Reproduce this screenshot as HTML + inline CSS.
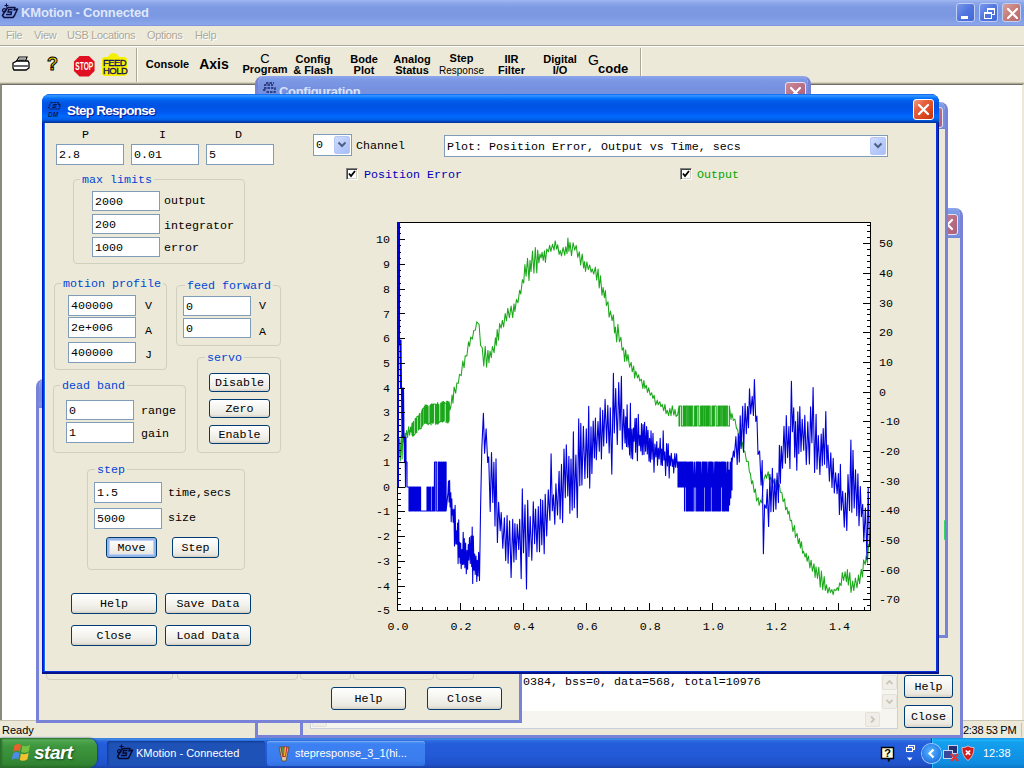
<!DOCTYPE html><html><head><meta charset="utf-8"><title>KMotion - Connected</title><style>
*{box-sizing:border-box;margin:0;padding:0}
html,body{width:1024px;height:768px;overflow:hidden;background:#fff}
body{position:relative;font-family:"Liberation Sans",sans-serif;font-size:11px;color:#000}
.abs{position:absolute}
.m{font-family:"Liberation Mono","DejaVu Sans Mono",monospace;font-size:11.67px;line-height:14px;white-space:pre;color:#000}
.in{position:absolute;background:#fff;border:1px solid #7f9db9;font-family:"Liberation Mono",monospace;font-size:11.67px;line-height:18px;padding-left:2px;white-space:pre;overflow:hidden}
.gb{position:absolute;border:1px solid #d0d0bf;border-radius:4px}
.gl{position:absolute;background:#ece9d8;color:#0046d5;font-family:"Liberation Mono",monospace;font-size:11.67px;line-height:14px;white-space:pre;padding:0 2px}
.btn{position:absolute;border:1px solid #003c74;border-radius:3px;background:linear-gradient(#fff 0,#f4f3ee 50%,#eae8df 85%,#d6d0c5 100%);font-family:"Liberation Mono",monospace;font-size:11.67px;text-align:center;white-space:pre;color:#000}
.btn.def{box-shadow:inset 0 0 0 2px #98b5ea, inset 0 0 0 3px #bcd1f5}
.sb{width:15px;height:15px;border:1px solid #e4e1d6;border-radius:2px;background:#efeee8}
.tb{position:absolute;font-family:"Liberation Sans",sans-serif;font-weight:bold;font-size:11px;line-height:11px;text-align:center;white-space:pre;color:#000}
</style></head><body><div class="abs" id="mtitle" style="left:0;top:0;width:1024px;height:26px;background:linear-gradient(#a2b8f2 0,#8ea8ea 10%,#7d9ae3 28%,#7a97e1 60%,#86a2e8 86%,#8aa5ea 94%,#7890d8 100%)"></div><div class="abs" style="left:21px;top:5px;font:bold 13px/16px 'Liberation Sans',sans-serif;color:#dfe7fa;white-space:pre;letter-spacing:-0.15px" id="mtxt">KMotion - Connected</div><svg class="abs" style="left:0px;top:0px" width="20" height="22" viewBox="0 0 20 22"><path d="M4 17.5L2.5 15.5L6 9.5L8 7.5H15L14 10L17.5 9L14.5 15.5L13 17.5Z" fill="none" stroke="#0c1040" stroke-width="1.5" stroke-linejoin="round"/><path d="M12.5 9.5H8.5L8 12H11.5L11 14.5H6" fill="none" stroke="#0c1040" stroke-width="1.4"/><circle cx="4.3" cy="10.3" r="1.7" fill="none" stroke="#0c1040" stroke-width="1.3"/><path d="M6.5 3.5v4M4.5 5.5h4" stroke="#0c1040" stroke-width="1.1"/></svg><div class="abs" style="left:956px;top:3px;width:19px;height:19px;border:1px solid #c0cef4;border-radius:3px;background:linear-gradient(135deg,#7b97ea 0,#5076de 50%,#4468d4 100%);overflow:hidden"><div style="position:absolute;left:4px;top:12px;width:7px;height:3px;background:#fff"></div></div><div class="abs" style="left:979px;top:3px;width:19px;height:19px;border:1px solid #c0cef4;border-radius:3px;background:linear-gradient(135deg,#7b97ea 0,#5076de 50%,#4468d4 100%);overflow:hidden"><div style="position:absolute;left:7px;top:4px;width:8px;height:7px;border:1px solid #fff;border-top-width:2px"></div><div style="position:absolute;left:4px;top:8px;width:8px;height:7px;border:1px solid #fff;border-top-width:2px;background:#5076de"></div></div><div class="abs" style="left:1002px;top:3px;width:19px;height:19px;border:1px solid #c0cef4;border-radius:3px;background:linear-gradient(135deg,#d8a09c 0,#c67c78 50%,#b86a68 100%);overflow:hidden"><svg width="19" height="19" viewBox="0 0 19 19" style="position:absolute;left:0;top:0"><path d="M5 5l9 9M14 5l-9 9" stroke="#fff" stroke-width="2.2" stroke-linecap="round"/></svg></div><div class="abs" style="left:0;top:26px;width:1024px;height:20px;background:#ece9d8"></div><div class="abs" style="left:6px;top:29px;font:11px/13px 'Liberation Sans',sans-serif;letter-spacing:-0.35px;color:#aca899;white-space:pre;text-shadow:1px 1px 0 #fff">File</div><div class="abs" style="left:34px;top:29px;font:11px/13px 'Liberation Sans',sans-serif;letter-spacing:-0.35px;color:#aca899;white-space:pre;text-shadow:1px 1px 0 #fff">View</div><div class="abs" style="left:67px;top:29px;font:11px/13px 'Liberation Sans',sans-serif;letter-spacing:-0.35px;color:#aca899;white-space:pre;text-shadow:1px 1px 0 #fff">USB Locations</div><div class="abs" style="left:147px;top:29px;font:11px/13px 'Liberation Sans',sans-serif;letter-spacing:-0.35px;color:#aca899;white-space:pre;text-shadow:1px 1px 0 #fff">Options</div><div class="abs" style="left:195px;top:29px;font:11px/13px 'Liberation Sans',sans-serif;letter-spacing:-0.35px;color:#aca899;white-space:pre;text-shadow:1px 1px 0 #fff">Help</div><div class="abs" style="left:0;top:45px;width:1024px;height:1px;background:#aca899"></div><div class="abs" style="left:0;top:46px;width:1024px;height:1px;background:#fff"></div><div class="abs" style="left:0;top:47px;width:1024px;height:37px;background:#ece9d8"></div><div class="abs" style="left:0;top:82px;width:1024px;height:1px;background:#d8d2bd"></div><div class="abs" style="left:0;top:83px;width:1024px;height:1px;background:#aca899"></div><div class="abs" style="left:136px;top:48px;width:1px;height:34px;background:#aca899"></div><div class="abs" style="left:137px;top:48px;width:1px;height:34px;background:#fff"></div><div class="abs" style="left:640px;top:48px;width:1px;height:34px;background:#aca899"></div><div class="abs" style="left:641px;top:48px;width:1px;height:34px;background:#fff"></div><svg class="abs" style="left:11px;top:55px" width="20" height="18" viewBox="0 0 20 18"><path d="M5 7 L8 2 L16 2 L14 7" fill="#fff" stroke="#000" stroke-width="1.2"/><path d="M2 8 L6 6 L17 6 L18 8 L18 13 L15 15 L3 15 L2 13 Z" fill="#fff" stroke="#000" stroke-width="1.3"/><path d="M3 11 H17" stroke="#000" stroke-width="1.2"/><path d="M8 4h6M7 5.3h6" stroke="#000" stroke-width=".7"/></svg><div class="abs" style="left:47px;top:54px;font:bold 18px/20px 'Liberation Sans',sans-serif;color:#e8d800;-webkit-text-stroke:1px #000">?</div><svg class="abs" style="left:72.5px;top:54.5px" width="22.5" height="22.5" viewBox="0 0 24 24"><polygon points="7,1 17,1 23,7 23,17 17,23 7,23 1,17 1,7" fill="#e01020"/><text x="12" y="16.5" font-family="Liberation Sans, sans-serif" font-size="12" font-weight="bold" fill="#fff" text-anchor="middle" textLength="19" lengthAdjust="spacingAndGlyphs">STOP</text></svg><div class="abs" style="left:108px;top:53px;width:11px;height:11px;border-radius:6px;background:#f4f000"></div><div class="abs" style="left:102px;top:57px;width:25px;height:19px;border-radius:3px;background:#f4f000"></div>
<div class="abs" style="left:103px;top:58.5px;width:25px;text-align:left;font:9.5px/8.3px 'Liberation Sans',sans-serif;-webkit-text-stroke:.35px #101060;color:#101060;white-space:pre;letter-spacing:-0.55px">FEED
HOLD</div><div class="tb" style="left:127.5px;width:80px;top:59px;font-size:11px">Console</div><div class="tb" style="left:174px;width:80px;top:59px;font-size:14px;top:57px;line-height:14px">Axis</div><div class="tb" style="left:225px;width:80px;top:52px;font-weight:normal;font-size:13px;line-height:13px">C</div><div class="tb" style="left:225px;width:80px;top:64px">Program</div><div class="tb" style="left:273px;width:80px;top:54px;">Config
&amp; Flash</div><div class="tb" style="left:324px;width:80px;top:54px;">Bode
Plot</div><div class="tb" style="left:372px;width:80px;top:54px;">Analog
Status</div><div class="tb" style="left:421.5px;width:80px;top:53px">Step</div><div class="tb" style="left:421.5px;width:80px;top:65px;font-weight:normal;font-size:10px">Response</div><div class="tb" style="left:471.5px;width:80px;top:54px;">IIR
Filter</div><div class="tb" style="left:520px;width:80px;top:54px;">Digital
I/O</div><div class="tb" style="left:588px;top:53px;font-weight:normal;font-size:14px;line-height:14px;text-align:left">G</div><div class="tb" style="left:598px;top:62px;font-size:13px;line-height:13px;text-align:left">code</div><div class="abs" style="left:0;top:84px;width:1024px;height:639px;background:#fff;border-left:2px solid #8c8a7c;border-right:2px solid #ece9d8;border-top:1px solid #716f64"></div><div class="abs" style="left:0;top:720px;width:1024px;height:18px;background:#ece9d8;border-top:1px solid #c5c2b2"></div><div class="abs" style="left:2px;top:723px;font:11px/14px 'Liberation Sans',sans-serif;white-space:pre">Ready</div><div class="abs" style="left:961px;top:723px;width:61px;height:14px;border-right:1px solid #c5c2b2"></div><div class="abs" style="left:963px;top:723px;letter-spacing:-0.3px;font:11px/14px 'Liberation Sans',sans-serif;white-space:pre">2:38 53 PM</div><div class="abs" style="left:255px;top:76px;width:556px;height:662px;background:#ece9d8;border:3px solid #7882d6;border-top:none;border-radius:8px 8px 0 0;overflow:hidden"><div class="abs" style="left:-3px;top:0;width:556px;height:29px;background:linear-gradient(#8ea6ec 0,#7d9ae6 12%,#7591e0 40%,#748fde 70%,#7b95e2 90%,#6f86d6 100%);box-shadow:inset 2px 0 0 #6878d0,inset -2px 0 0 #6878d0"></div><div class="abs" style="left:21px;top:8px;letter-spacing:-0.3px;font:bold 13px/16px 'Liberation Sans',sans-serif;color:#d9e2f8;white-space:pre">Configuration</div><div class="abs" style="left:527px;top:6px;width:21px;height:21px;border:1px solid #e4e4f6;border-radius:3px;background:linear-gradient(135deg,#cc8c9c,#b96e84 50%,#ad607a)"><svg width="19" height="19" viewBox="0 0 19 19" style="position:absolute;left:0;top:0"><path d="M5 5l9 9M14 5l-9 9" stroke="#fff" stroke-width="2.2" stroke-linecap="round"/></svg></div><svg class="abs" style="left:3px;top:6px" width="16" height="14" viewBox="0 0 16 14"><path d="M3 3h9M5 1h8M3 6h11v4h-9M2 8h3" fill="none" stroke="#1a2460" stroke-width="1.3" stroke-dasharray="2.5 1"/></svg></div><div class="abs" style="left:300px;top:208px;width:663px;height:530px;background:#ece9d8;border:3px solid #7882d6;border-top:none;border-radius:8px 8px 0 0;overflow:hidden"><div class="abs" style="left:-3px;top:0;width:663px;height:30px;background:linear-gradient(#8ea6ec 0,#7d9ae6 12%,#7591e0 40%,#748fde 70%,#7b95e2 90%,#6f86d6 100%);box-shadow:inset 2px 0 0 #6878d0,inset -2px 0 0 #6878d0"></div><div class="abs" style="left:634px;top:6px;width:21px;height:21px;border:1px solid #e4e4f6;border-radius:3px;background:linear-gradient(135deg,#cc8c9c,#b96e84 50%,#ad607a)"><svg width="19" height="19" viewBox="0 0 19 19" style="position:absolute;left:0;top:0"><path d="M5 5l9 9M14 5l-9 9" stroke="#fff" stroke-width="2.2" stroke-linecap="round"/></svg></div><div class="abs" style="left:7px;top:465px;width:588px;height:56px;background:#fff;border:1px solid #c8d0e0"></div><div class="abs m" style="left:220px;top:467px">0384, bss=0, data=568, total=10976</div><div class="abs" style="left:8px;top:503px;width:570px;height:17px;background:#f6f5f0"></div><div class="abs" style="left:578px;top:466px;width:16px;height:54px;background:#f6f5f0"></div><div class="abs sb" style="left:579px;top:467px"><svg width="13" height="13" viewBox="0 0 13 13"><path d="M3.5 8l3-3l3 3" fill="none" stroke="#c9c6ba" stroke-width="1.8"/></svg></div><div class="abs sb" style="left:579px;top:486px"><svg width="13" height="13" viewBox="0 0 13 13"><path d="M3.5 5l3 3l3-3" fill="none" stroke="#c9c6ba" stroke-width="1.8"/></svg></div><div class="abs sb" style="left:562px;top:504px"><svg width="13" height="13" viewBox="0 0 13 13"><path d="M5 3.5l3 3l-3 3" fill="none" stroke="#c9c6ba" stroke-width="1.8"/></svg></div><div class="abs sb" style="left:9px;top:504px"><svg width="13" height="13" viewBox="0 0 13 13"><path d="M8 3.5l-3 3l3 3" fill="none" stroke="#c9c6ba" stroke-width="1.8"/></svg></div></div><div class="btn " style="left:904px;top:675px;width:49px;height:23px;line-height:23px">Help</div><div class="btn " style="left:904px;top:705px;width:49px;height:23px;line-height:23px">Close</div><div class="abs" style="left:600px;top:102px;width:348px;height:536px;background:#ece9d8;border:3px solid #7882d6;border-top:none;border-radius:8px 8px 0 0;overflow:hidden"><div class="abs" style="left:-3px;top:0;width:348px;height:27px;background:linear-gradient(#8ea6ec 0,#7d9ae6 12%,#7591e0 40%,#748fde 70%,#7b95e2 90%,#6f86d6 100%);box-shadow:inset 2px 0 0 #6878d0,inset -2px 0 0 #6878d0"></div><div class="abs" style="left:319px;top:5px;width:21px;height:21px;border:1px solid #e4e4f6;border-radius:3px;background:linear-gradient(135deg,#cc8c9c,#b96e84 50%,#ad607a)"><svg width="19" height="19" viewBox="0 0 19 19" style="position:absolute;left:0;top:0"><path d="M5 5l9 9M14 5l-9 9" stroke="#fff" stroke-width="2.2" stroke-linecap="round"/></svg></div><div class="abs" style="left:341px;top:418px;width:3px;height:20px;background:#30d860;border-radius:1px"></div></div><div class="abs" style="left:36px;top:379px;width:486px;height:344px;background:#ece9d8;border:3px solid #7882d6;border-top:none;border-radius:8px 8px 0 0;overflow:hidden"><div class="abs" style="left:-3px;top:0;width:486px;height:29px;background:linear-gradient(#8ea6ec 0,#7d9ae6 12%,#7591e0 40%,#748fde 70%,#7b95e2 90%,#6f86d6 100%);box-shadow:inset 2px 0 0 #6878d0,inset -2px 0 0 #6878d0"></div><div class="abs" style="left:457px;top:5px;width:21px;height:21px;border:1px solid #e4e4f6;border-radius:3px;background:linear-gradient(135deg,#cc8c9c,#b96e84 50%,#ad607a)"><svg width="19" height="19" viewBox="0 0 19 19" style="position:absolute;left:0;top:0"><path d="M5 5l9 9M14 5l-9 9" stroke="#fff" stroke-width="2.2" stroke-linecap="round"/></svg></div><div class="abs" style="left:7px;top:281px;width:127px;height:20px;border:1px solid #d0d0bf;border-radius:4px"></div><div class="abs" style="left:138px;top:281px;width:121px;height:20px;border:1px solid #d0d0bf;border-radius:4px"></div><div class="abs" style="left:261px;top:281px;width:51px;height:20px;border:1px solid #d0d0bf;border-radius:4px"></div><div class="abs" style="left:314px;top:281px;width:81px;height:20px;border:1px solid #d0d0bf;border-radius:4px"></div><div class="abs" style="left:397px;top:281px;width:38px;height:20px;border:1px solid #d0d0bf;border-radius:4px"></div></div><div class="btn " style="left:331px;top:687px;width:75px;height:23px;line-height:23px">Help</div><div class="btn " style="left:427px;top:687px;width:75px;height:23px;line-height:23px">Close</div><div class="abs" id="dlg" style="left:42px;top:94px;width:897px;height:580px;border-radius:8px 8px 0 0;background:#0831d9;overflow:hidden"><div class="abs" style="left:0;top:0;width:897px;height:29px;background:linear-gradient(#0058ee 0,#3593ff 4%,#288eff 8%,#127dff 12%,#036ffc 16%,#0262ee 22%,#0057e5 30%,#0054e3 40%,#0055eb 56%,#005bf5 66%,#026afe 76%,#0062ef 86%,#0052d6 92%,#0040ab 96%,#003092 100%)"></div><div class="abs" style="left:3px;top:29px;width:891px;height:548px;background:#ece9d8;box-shadow:inset 1px 0 0 #f6f4ec"></div><div class="abs" style="left:0;top:29px;width:1px;height:551px;background:#0019cf"></div><div class="abs" style="left:2px;top:29px;width:1px;height:548px;background:#166aee"></div><div class="abs" style="left:896px;top:29px;width:1px;height:551px;background:#00138c"></div><div class="abs" style="left:0;top:578px;width:897px;height:2px;background:#00138c"></div></div><div class="abs" style="left:67px;top:102px;letter-spacing:-0.75px;font:bold 13.5px/17px 'Liberation Sans',sans-serif;color:#fff;white-space:pre;text-shadow:1px 1px 1px #0f1089" id="dtxt">Step Response</div><svg class="abs" style="left:47px;top:101px" width="15" height="17" viewBox="0 0 15 17"><path d="M4 1.5H12L11 4L13.5 3.5L12 8H3L1.5 6.5Z" fill="none" stroke="#071a55" stroke-width="1.2" stroke-dasharray="2 .8"/><path d="M10 3.5H6.5L6 5H9L8.5 6.5H5" fill="none" stroke="#071a55" stroke-width="1"/><text x="1" y="15.5" font-family="Liberation Sans, sans-serif" font-size="6.5" font-weight="bold" font-style="italic" fill="#071a55">DM</text></svg><div class="abs" style="left:913px;top:99px;width:21px;height:21px;border:1px solid #fff;border-radius:3px;background:linear-gradient(135deg,#f0a088 0,#e86444 30%,#da441c 70%,#c23610 100%)"><svg width="19" height="19" viewBox="0 0 19 19"><path d="M5 5l9 9M14 5l-9 9" stroke="#fff" stroke-width="2.3" stroke-linecap="round"/></svg></div><div class="abs m" style="left:82px;top:128px">P</div><div class="abs m" style="left:159px;top:128px">I</div><div class="abs m" style="left:235px;top:128px">D</div><div class="in" style="left:56px;top:144px;width:68px;height:21px;line-height:21px">2.8</div><div class="in" style="left:131px;top:144px;width:68px;height:21px;line-height:21px">0.01</div><div class="in" style="left:206px;top:144px;width:68px;height:21px;line-height:21px">5</div><div class="gb" style="left:73px;top:179px;width:172px;height:85px"></div><div class="gl" style="left:80px;top:173px">max limits</div><div class="in" style="left:92px;top:191px;width:68px;height:20px;line-height:20px">2000</div><div class="in" style="left:92px;top:214px;width:68px;height:20px;line-height:20px">200</div><div class="in" style="left:92px;top:237px;width:68px;height:20px;line-height:20px">1000</div><div class="abs m" style="left:164px;top:194px">output</div><div class="abs m" style="left:164px;top:219px">integrator</div><div class="abs m" style="left:164px;top:241px">error</div><div class="gb" style="left:54px;top:283px;width:113px;height:87px"></div><div class="gl" style="left:61px;top:277px">motion profile</div><div class="in" style="left:68px;top:295px;width:68px;height:21px;line-height:21px">400000</div><div class="in" style="left:68px;top:317px;width:68px;height:21px;line-height:21px">2e+006</div><div class="in" style="left:68px;top:342px;width:68px;height:21px;line-height:21px">400000</div><div class="abs m" style="left:145px;top:299px">V</div><div class="abs m" style="left:145px;top:324px">A</div><div class="abs m" style="left:145px;top:348px">J</div><div class="gb" style="left:176px;top:285px;width:105px;height:61px"></div><div class="gl" style="left:185px;top:279px">feed forward</div><div class="in" style="left:183px;top:296px;width:68px;height:20px;line-height:20px">0</div><div class="in" style="left:183px;top:318px;width:68px;height:20px;line-height:20px">0</div><div class="abs m" style="left:259px;top:299px">V</div><div class="abs m" style="left:259px;top:325px">A</div><div class="gb" style="left:197px;top:357px;width:84px;height:96px"></div><div class="gl" style="left:205px;top:351px">servo</div><div class="btn " style="left:209px;top:373px;width:61px;height:19px;line-height:19px">Disable</div><div class="btn " style="left:209px;top:399px;width:61px;height:19px;line-height:19px">Zero</div><div class="btn " style="left:209px;top:425px;width:61px;height:19px;line-height:19px">Enable</div><div class="gb" style="left:53px;top:385px;width:133px;height:68px"></div><div class="gl" style="left:60px;top:379px">dead band</div><div class="in" style="left:66px;top:400px;width:68px;height:20px;line-height:20px">0</div><div class="in" style="left:66px;top:422px;width:68px;height:21px;line-height:21px">1</div><div class="abs m" style="left:141px;top:404px">range</div><div class="abs m" style="left:141px;top:427px">gain</div><div class="gb" style="left:87px;top:469px;width:158px;height:101px"></div><div class="gl" style="left:95px;top:463px">step</div><div class="in" style="left:94px;top:482px;width:68px;height:21px;line-height:21px">1.5</div><div class="in" style="left:94px;top:508px;width:68px;height:21px;line-height:21px">5000</div><div class="abs m" style="left:168px;top:486px">time,secs</div><div class="abs m" style="left:168px;top:511px">size</div><div class="btn def" style="left:106px;top:537px;width:51px;height:21px;line-height:21px">Move</div><div class="btn " style="left:172px;top:537px;width:47px;height:21px;line-height:21px">Step</div><div class="btn " style="left:71px;top:593px;width:86px;height:21px;line-height:21px">Help</div><div class="btn " style="left:165px;top:593px;width:86px;height:21px;line-height:21px">Save Data</div><div class="btn " style="left:71px;top:625px;width:86px;height:21px;line-height:21px">Close</div><div class="btn " style="left:165px;top:625px;width:86px;height:21px;line-height:21px">Load Data</div><div class="in" style="left:313px;top:134px;width:39px;height:22px;line-height:20px">0</div><div class="abs" style="left:334px;top:136px;width:16px;height:18px;border:1px solid #b4c7f5;border-radius:2px;background:linear-gradient(135deg,#cfdcfd,#b5c9fa 60%,#a8bef5)"><svg width="14" height="15" viewBox="0 0 14 15"><path d="M3.5 5.5l3.5 3.5l3.5-3.5" fill="none" stroke="#4d6185" stroke-width="2"/></svg></div><div class="abs m" style="left:356px;top:139px">Channel</div><div class="in" style="left:444px;top:135px;width:444px;height:22px;line-height:22px">Plot: Position Error, Output vs Time, secs</div><div class="abs" style="left:870px;top:137px;width:16px;height:18px;border:1px solid #b4c7f5;border-radius:2px;background:linear-gradient(135deg,#cfdcfd,#b5c9fa 60%,#a8bef5)"><svg width="14" height="15" viewBox="0 0 14 15"><path d="M3.5 5.5l3.5 3.5l3.5-3.5" fill="none" stroke="#4d6185" stroke-width="2"/></svg></div><div class="abs" style="left:346px;top:168px;width:12px;height:12px;background:#fff;border:1px solid;border-color:#808080 #fff #fff #808080;box-shadow:inset 1px 1px 0 #404040,inset -1px -1px 0 #d4d0c8"><svg width="10" height="10" viewBox="0 0 10 10"><path d="M2 4.5l2 2.5l4-5" fill="none" stroke="#000" stroke-width="1.8"/></svg></div><div class="abs m" style="left:364px;top:168px;color:#0000b8">Position Error</div><div class="abs" style="left:680px;top:168px;width:12px;height:12px;background:#fff;border:1px solid;border-color:#808080 #fff #fff #808080;box-shadow:inset 1px 1px 0 #404040,inset -1px -1px 0 #d4d0c8"><svg width="10" height="10" viewBox="0 0 10 10"><path d="M2 4.5l2 2.5l4-5" fill="none" stroke="#000" stroke-width="1.8"/></svg></div><div class="abs m" style="left:697px;top:168px;color:#00a800">Output</div><svg class="abs" style="left:0;top:0" width="1024" height="768" viewBox="0 0 1024 768"><defs><clipPath id="pc"><rect x="397" y="222" width="474" height="389"/></clipPath></defs><rect x="397" y="222" width="473" height="388" fill="#fff"/><polyline points="397.0,477.8 398.0,463.3 398.8,456.5 399.5,438.9 400.3,461.0 401.3,435.6 402.1,459.1 402.9,429.9 404.0,442.4 405.0,433.2 405.6,437.6 406.6,430.5 407.6,437.5 408.6,426.7 409.6,435.2 410.6,427.0 411.3,432.2 412.0,423.3 412.0,434.8 412.8,436.2 412.8,422.8 413.6,421.4 413.6,435.8 415.2,433.7 415.2,418.5 416.0,418.3 416.0,432.6 416.8,432.7 416.8,416.8 418.4,416.1 418.4,430.1 419.2,428.1 419.2,414.2 420.0,413.3 420.0,429.1 421.6,428.1 421.6,412.0 422.4,408.8 422.4,426.1 423.2,424.2 423.2,408.9 424.5,406.6 424.5,423.5 425.1,422.7 425.1,404.8 425.7,406.7 425.7,422.8 426.3,423.6 426.3,405.0 426.9,406.8 426.9,422.6 427.5,423.9 427.5,405.4 428.1,406.6 428.1,424.7 429.9,422.9 429.9,406.3 430.5,404.8 430.5,423.1 431.1,424.9 431.1,406.1 431.7,403.8 431.7,422.5 432.3,422.6 432.3,404.0 432.9,404.6 432.9,423.6 433.5,421.8 433.5,403.9 435.3,404.0 435.3,422.7 435.9,424.5 435.9,404.4 436.5,404.7 436.5,423.1 437.1,423.5 437.1,404.3 437.7,402.5 437.7,424.1 438.3,424.0 438.3,404.6 438.9,404.6 438.9,422.5 440.7,421.5 440.7,403.1 441.3,403.7 441.3,421.3 441.9,421.7 441.9,401.9 442.5,402.1 442.5,422.1 443.1,421.0 443.1,401.6 443.7,401.8 443.7,421.2 444.3,421.0 444.3,402.4 446.1,403.6 446.1,422.6 446.7,421.4 446.7,401.3 447.3,401.8 447.3,421.7 447.9,423.1 447.9,401.1 448.5,403.6 448.5,421.9 449.1,420.7 449.1,401.9 450.0,410.0 451.0,405.8 452.1,394.9 453.0,403.3 454.1,387.0 455.7,393.1 456.9,382.9 458.4,383.2 459.5,374.3 461.2,375.6 462.8,361.0 464.1,367.8 465.2,355.8 466.9,356.0 468.5,341.9 469.6,346.3 470.7,337.1 472.3,339.1 473.8,330.5 475.4,330.1 476.7,321.8 477.9,323.2 479.1,324.4 480.6,345.5 482.2,347.6 483.8,365.9 485.2,346.2 486.6,367.1 487.9,350.3 488.9,362.8 490.0,351.0 491.3,357.7 492.4,346.5 494.1,352.6 495.4,337.8 496.3,345.4 497.2,329.5 498.5,340.3 499.6,323.6 501.2,328.2 502.3,320.2 503.6,326.9 505.2,313.6 506.5,320.8 507.8,308.4 509.4,317.7 511.1,306.1 512.7,317.6 514.0,303.9 514.9,311.4 516.5,299.4 518.0,302.7 519.6,290.2 520.8,294.0 522.4,279.6 523.7,283.0 524.9,264.6 526.1,276.3 527.5,258.3 529.0,280.6 530.0,260.4 531.0,271.6 532.5,251.1 533.9,273.2 535.3,247.5 536.8,273.0 537.7,250.1 538.9,263.0 540.0,254.1 541.1,257.9 542.1,252.2 543.2,260.4 544.5,250.8 545.4,262.4 546.8,249.1 548.4,251.7 549.7,245.3 550.9,251.5 552.5,244.3 554.0,250.2 555.2,240.9 556.7,249.2 557.7,244.8 559.1,254.4 560.2,250.6 561.5,255.9 563.1,247.6 564.8,255.3 565.7,246.7 567.0,253.7 567.9,238.0 568.9,251.4 570.0,242.4 571.5,255.7 573.1,242.7 574.7,250.1 576.2,245.4 577.8,257.4 579.3,251.8 580.6,264.9 582.2,254.0 583.6,267.9 584.5,261.5 585.5,271.4 586.9,261.9 588.2,269.5 589.7,265.0 591.1,272.2 592.2,268.9 593.7,274.0 595.4,267.1 596.7,280.1 598.1,269.0 599.2,288.0 600.5,275.8 602.0,295.3 603.1,287.4 604.4,297.8 605.4,290.5 606.4,305.6 608.0,301.7 609.1,317.1 610.5,311.1 612.1,320.6 613.4,314.9 614.5,333.0 615.4,327.0 616.7,342.0 617.9,324.2 619.4,341.8 620.9,337.2 622.1,350.2 623.5,347.7 624.6,361.5 625.7,349.9 626.8,361.1 628.0,354.4 629.6,367.2 631.2,362.4 632.2,371.8 633.7,366.1 634.6,378.1 635.8,371.1 637.5,377.9 638.6,374.7 639.7,380.9 641.3,379.2 642.9,388.4 643.9,380.4 644.9,388.4 646.2,385.2 647.5,392.4 648.7,387.8 650.3,395.3 651.7,392.8 652.9,398.5 654.1,395.2 655.7,405.1 657.3,400.1 658.2,404.8 659.8,401.7 660.9,406.7 662.2,404.4 663.7,410.7 665.0,404.4 666.0,413.6 667.2,410.3 668.6,415.7 669.9,408.4 671.0,415.7 672.3,405.8 673.9,415.1 675.0,409.4 676.1,416.4 677.6,415.0 679.0,406.0 679.0,426.0 679.6,426.0 679.6,406.0 681.4,406.0 681.4,426.0 683.2,426.0 683.2,406.0 683.8,406.0 683.8,426.0 684.4,426.0 684.4,406.0 685.0,406.0 685.0,426.0 685.6,426.0 685.6,406.0 686.8,406.0 686.8,426.0 687.4,426.0 687.4,406.0 688.6,406.0 688.6,426.0 689.2,426.0 689.2,406.0 689.8,406.0 689.8,426.0 690.4,426.0 690.4,406.0 691.0,406.0 691.0,426.0 691.6,426.0 691.6,406.0 692.8,406.0 692.8,426.0 694.6,426.0 694.6,406.0 695.2,406.0 695.2,426.0 695.8,426.0 695.8,406.0 696.4,406.0 696.4,426.0 697.0,426.0 697.0,406.0 698.8,406.0 698.8,426.0 700.6,426.0 700.6,406.0 701.2,406.0 701.2,426.0 701.8,426.0 701.8,406.0 702.4,406.0 702.4,426.0 703.0,426.0 703.0,406.0 704.2,406.0 704.2,426.0 704.8,426.0 704.8,406.0 706.0,406.0 706.0,426.0 706.6,426.0 706.6,406.0 707.2,406.0 707.2,426.0 707.8,426.0 707.8,406.0 708.4,406.0 708.4,426.0 709.0,426.0 709.0,406.0 710.2,406.0 710.2,426.0 712.0,426.0 712.0,406.0 712.6,406.0 712.6,426.0 713.2,426.0 713.2,406.0 713.8,406.0 713.8,426.0 714.4,426.0 714.4,406.0 716.2,406.0 716.2,426.0 718.0,426.0 718.0,406.0 718.6,406.0 718.6,426.0 719.2,426.0 719.2,406.0 719.8,406.0 719.8,426.0 720.4,426.0 720.4,406.0 721.6,406.0 721.6,426.0 722.2,426.0 722.2,406.0 723.4,406.0 723.4,426.0 724.0,426.0 724.0,406.0 724.6,406.0 724.6,426.0 725.2,426.0 725.2,406.0 725.8,406.0 725.8,426.0 726.4,426.0 726.4,406.0 727.6,406.0 727.6,426.0 729.4,426.0 729.4,406.0 731.0,419.5 731.9,413.4 733.4,420.5 734.9,419.0 736.5,428.7 737.6,429.0 738.8,437.7 739.8,436.2 741.2,446.5 742.3,442.0 743.3,450.7 744.9,451.5 746.5,461.4 748.2,461.2 749.4,472.0 750.4,473.6 751.6,483.7 752.7,480.7 754.2,492.4 755.4,489.0 756.6,500.9 758.1,497.6 759.1,505.4 760.6,500.1 761.7,502.7 762.8,488.6 764.0,479.0 765.6,474.4 766.5,478.3 768.2,471.7 769.3,479.7 770.9,477.4 772.4,484.4 773.8,479.7 775.0,488.6 776.5,480.3 777.8,489.1 779.4,484.6 780.4,492.2 781.9,492.7 783.1,501.8 784.6,498.7 785.6,509.7 786.9,507.2 788.0,514.1 789.0,511.1 790.2,520.8 791.5,520.2 792.9,531.5 794.5,525.6 795.4,537.4 797.1,533.4 798.3,543.7 799.4,538.6 800.4,548.0 801.5,541.7 802.6,553.2 803.6,551.3 805.1,557.2 806.2,553.2 807.1,561.4 808.4,556.0 809.9,567.9 811.1,560.2 812.4,571.3 814.0,563.7 815.1,577.5 816.0,566.7 817.5,578.4 818.8,567.2 820.2,587.3 821.4,571.0 822.7,589.7 824.2,576.6 825.3,590.4 826.5,584.8 827.8,593.1 829.3,587.4 830.4,592.6 831.9,589.6 833.2,594.7 834.2,589.3 835.8,590.7 837.3,587.6 838.3,590.7 839.7,582.9 841.1,585.6 842.3,572.6 843.6,580.4 845.1,571.8 846.4,581.7 847.4,569.5 848.3,585.1 849.8,572.6 851.0,592.4 852.7,581.1 853.8,590.6 855.4,578.0 857.0,587.8 858.5,575.0 859.6,583.8 861.2,569.2 862.5,576.9 863.6,559.9 865.2,564.7 866.2,555.8 867.4,563.2 868.7,543.9" fill="none" stroke="#1aa81a" stroke-width="1.05" stroke-linejoin="round" clip-path="url(#pc)"/><polyline points="397.5,222.0 397.5,300.0 398.5,222.0 398.5,340.0 399.5,222.0 399.5,345.0 400.0,340.0 400.5,388.0 401.0,340.0 401.5,388.0 402.0,437.0 402.5,388.0 403.0,437.0 403.5,388.0 404.0,437.0 404.5,462.0 405.0,437.0 405.5,487.0 406.0,437.0 406.0,462.0 407.0,462.0 407.0,487.0 409.0,487.0 409.0,487.0 409.0,511.0 409.6,511.0 409.6,487.0 410.1,487.0 410.1,511.0 410.7,511.0 410.7,487.0 411.2,487.0 411.2,511.0 411.8,511.0 411.8,487.0 412.9,487.0 412.9,511.0 413.4,511.0 413.4,487.0 414.5,487.0 414.5,511.0 415.1,511.0 415.1,487.0 415.6,487.0 415.6,511.0 416.2,511.0 416.2,487.0 416.7,487.0 416.7,511.0 417.3,511.0 417.3,487.0 418.4,487.0 418.4,511.0 418.9,511.0 418.9,487.0 420.0,487.0 420.0,511.0 420.6,511.0 420.6,487.0 420.6,511.0 427.0,511.0 427.0,487.0 427.0,511.0 427.6,511.0 427.6,487.0 428.1,487.0 428.1,511.0 428.7,511.0 428.7,487.0 429.2,487.0 429.2,511.0 430.3,511.0 430.3,487.0 430.9,487.0 430.9,511.0 432.5,511.0 432.5,487.0 433.1,487.0 433.1,511.0 433.6,511.0 433.6,487.0 434.2,487.0 434.2,511.0 434.5,462.0 434.5,511.0 435.1,511.0 435.1,462.0 436.7,462.0 436.7,511.0 438.4,511.0 438.4,462.0 438.9,462.0 438.9,511.0 439.5,511.0 439.5,462.0 440.0,462.0 440.0,511.0 441.1,511.0 441.1,462.0 441.7,462.0 441.7,511.0 442.8,511.0 442.8,462.0 443.3,462.0 443.3,511.0 443.9,511.0 443.9,462.0 444.4,462.0 444.4,511.0 445.5,511.0 445.5,462.0 446.1,462.0 446.1,511.0 448.0,492.5 448.5,481.0 449.1,501.9 449.6,480.2 450.1,506.9 450.8,492.7 451.2,521.8 451.8,498.7 452.3,514.9 452.7,509.9 453.2,522.2 453.9,509.1 454.5,546.0 455.1,505.2 455.8,544.0 456.3,530.7 457.0,544.1 457.6,523.1 458.1,563.6 458.7,519.7 459.1,557.1 459.6,542.4 460.2,563.1 460.7,543.3 461.2,568.6 461.9,549.6 462.6,564.5 463.2,532.3 463.7,564.3 464.3,538.5 464.9,567.8 465.6,543.0 466.3,573.7 467.0,550.4 467.6,569.2 468.3,544.5 468.8,560.0 469.5,537.6 470.3,563.4 471.0,536.1 471.7,566.6 472.2,527.0 472.7,583.5 473.3,536.1 474.0,570.2 474.7,554.1 475.2,574.4 476.0,556.0 476.8,581.5 477.2,560.4 478.0,576.0 478.6,552.3 479.4,573.9 479.5,580.4 480.6,506.6 481.8,449.1 483.4,413.3 484.6,453.2 486.1,428.8 487.7,462.4 488.7,456.8 490.2,511.5 491.5,452.5 492.8,502.5 493.9,462.3 495.0,526.0 496.0,458.9 497.4,542.5 498.6,502.2 500.2,530.7 501.2,512.5 502.8,548.2 504.4,517.8 505.7,560.6 507.1,515.5 508.1,563.3 509.6,520.9 511.1,577.4 512.7,519.4 513.9,562.0 514.9,523.6 516.1,559.6 517.2,524.3 518.7,549.5 519.7,519.2 521.2,578.6 522.3,488.7 523.5,552.7 525.0,504.9 526.5,589.0 527.7,500.2 528.9,556.5 530.2,516.6 531.8,560.3 533.3,501.8 534.6,543.7 535.6,509.1 537.0,551.7 538.3,506.5 539.5,551.7 540.6,499.2 541.8,544.8 542.7,500.3 544.2,553.7 545.2,494.3 546.7,536.0 548.3,489.9 549.9,520.2 551.1,453.7 552.3,510.7 553.5,494.9 554.8,524.2 555.9,483.8 557.5,515.0 559.1,471.3 560.1,519.1 561.5,464.4 562.6,522.6 564.0,449.0 565.3,497.6 566.3,444.8 567.8,496.0 568.9,456.2 569.9,513.2 571.0,459.1 572.2,510.1 573.4,431.8 574.3,507.7 575.9,455.1 577.3,517.4 578.7,418.9 579.8,485.8 580.8,423.2 581.9,485.0 583.4,426.4 584.9,478.5 586.3,428.7 587.6,477.7 588.7,406.3 589.7,488.1 591.0,426.9 591.9,473.4 593.2,421.1 594.4,458.0 595.4,418.1 596.3,459.7 598.0,421.6 599.3,451.2 600.2,407.7 601.4,459.0 602.7,410.2 603.7,446.0 605.1,399.4 606.6,443.0 607.8,405.4 609.2,453.0 610.3,407.9 611.8,474.1 613.4,373.2 614.3,432.9 615.7,388.5 617.3,444.5 618.7,382.6 620.1,430.1 621.4,376.3 622.3,449.3 623.7,409.4 625.0,442.9 625.7,416.8 626.5,446.4 627.1,404.8 628.0,447.1 628.8,428.5 629.6,455.0 630.4,403.4 631.1,458.1 632.0,429.0 632.6,458.9 633.5,428.1 634.1,441.1 635.0,418.5 635.6,452.3 636.4,418.4 637.4,460.8 638.3,414.2 639.2,445.7 640.0,435.3 640.8,451.0 641.5,423.5 642.3,454.8 643.1,424.6 644.0,454.4 644.6,422.3 645.6,451.2 646.6,426.5 647.3,454.0 648.0,430.3 649.0,461.1 649.6,438.4 650.4,462.1 651.0,430.9 652.0,459.3 653.0,433.2 654.0,472.3 654.9,444.1 655.9,456.9 656.8,441.6 657.5,465.3 658.3,448.1 659.2,458.9 660.2,438.2 661.0,465.0 661.6,449.1 662.4,465.5 663.2,430.7 663.9,460.1 664.8,451.9 665.6,475.4 666.6,443.6 667.4,466.0 668.2,443.8 669.2,478.0 669.7,455.9 670.3,465.8 671.3,453.4 672.3,466.4 673.1,459.1 673.7,473.0 674.8,453.6 675.5,467.2 676.6,453.7 677.3,467.1 677.5,462.0 678.0,462.0 678.0,487.0 678.5,487.0 678.5,462.0 679.1,462.0 679.1,487.0 679.6,487.0 679.6,462.0 680.2,462.0 680.2,487.0 680.7,487.0 680.7,462.0 681.3,462.0 681.3,487.0 681.8,487.0 681.8,462.0 682.4,462.0 682.4,487.0 682.9,487.0 682.9,462.0 683.5,462.0 683.5,487.0 684.0,462.0 684.0,487.0 684.0,462.0 684.5,462.0 684.5,511.0 684.5,462.0 685.1,462.0 685.1,487.0 685.1,462.0 685.6,462.0 685.6,487.0 685.6,462.0 686.2,462.0 686.2,511.0 686.2,462.0 686.7,462.0 686.7,511.0 686.7,462.0 687.3,487.0 687.3,511.0 687.3,487.0 687.8,462.0 687.8,511.0 687.8,462.0 688.4,462.0 688.4,511.0 688.4,462.0 688.9,487.0 689.5,462.0 689.5,511.0 689.5,462.0 690.0,462.0 690.0,511.0 690.0,462.0 690.6,462.0 690.6,487.0 690.6,462.0 691.1,462.0 691.1,511.0 691.1,462.0 691.7,462.0 691.7,511.0 691.7,462.0 692.2,462.0 692.2,511.0 692.2,462.0 692.8,462.0 692.8,511.0 692.8,462.0 693.3,487.0 693.3,511.0 693.3,487.0 693.9,487.0 694.4,462.0 694.4,487.0 694.4,462.0 695.0,487.0 695.0,511.0 695.0,487.0 695.5,487.0 696.1,462.0 696.1,487.0 696.1,462.0 696.6,462.0 696.6,511.0 696.6,462.0 697.2,462.0 697.2,511.0 697.2,462.0 697.7,462.0 697.7,511.0 697.7,462.0 698.3,462.0 698.3,511.0 698.3,462.0 698.8,462.0 698.8,511.0 698.8,462.0 699.4,462.0 699.4,487.0 699.4,462.0 699.9,487.0 699.9,511.0 699.9,487.0 700.5,462.0 700.5,511.0 700.5,462.0 701.0,487.0 701.6,487.0 701.6,511.0 701.6,487.0 702.1,462.0 702.1,511.0 702.1,462.0 702.7,462.0 702.7,511.0 702.7,462.0 703.2,462.0 703.2,511.0 703.2,462.0 703.8,462.0 703.8,511.0 703.8,462.0 704.3,462.0 704.3,487.0 704.3,462.0 704.9,462.0 704.9,487.0 704.9,462.0 705.4,462.0 705.4,511.0 705.4,462.0 706.0,487.0 706.5,462.0 706.5,511.0 706.5,462.0 707.1,462.0 707.1,511.0 707.1,462.0 707.6,487.0 707.6,511.0 707.6,487.0 708.2,487.0 708.2,511.0 708.2,487.0 708.7,462.0 708.7,511.0 708.7,462.0 709.3,462.0 709.3,511.0 709.3,462.0 709.8,462.0 709.8,487.0 709.8,462.0 710.4,462.0 710.4,511.0 710.4,462.0 710.9,462.0 710.9,487.0 710.9,462.0 711.5,462.0 711.5,487.0 711.5,462.0 712.0,462.0 712.0,511.0 712.0,462.0 712.6,487.0 712.6,511.0 712.6,487.0 713.1,462.0 713.1,511.0 713.1,462.0 713.7,487.0 713.7,511.0 713.7,487.0 714.2,487.0 714.2,511.0 714.2,487.0 714.8,462.0 714.8,487.0 714.8,462.0 715.3,462.0 715.3,511.0 715.3,462.0 715.9,462.0 715.9,511.0 715.9,462.0 716.4,462.0 716.4,487.0 716.4,462.0 717.0,462.0 717.0,511.0 717.0,462.0 717.5,462.0 717.5,511.0 717.5,462.0 718.1,462.0 718.1,511.0 718.1,462.0 718.6,487.0 718.6,511.0 718.6,487.0 719.2,462.0 719.2,511.0 719.2,462.0 719.7,462.0 719.7,511.0 719.7,462.0 720.3,487.0 720.8,462.0 720.8,511.0 720.8,462.0 721.4,462.0 721.4,487.0 721.4,462.0 721.9,462.0 721.9,487.0 721.9,462.0 722.5,462.0 722.5,511.0 722.5,462.0 723.0,462.0 723.0,511.0 723.0,462.0 723.6,462.0 723.6,511.0 723.6,462.0 724.1,462.0 724.1,511.0 724.1,462.0 724.7,462.0 724.7,511.0 724.7,462.0 725.2,487.0 725.8,462.0 725.8,511.0 725.8,462.0 726.3,487.0 726.3,511.0 726.3,487.0 726.9,487.0 727.4,462.0 727.4,511.0 727.4,462.0 728.0,462.0 728.0,511.0 728.0,462.0 728.0,487.0 728.5,511.0 729.0,470.0 729.6,505.0 730.2,462.0 730.8,498.0 731.4,458.0 732.0,490.0 732.0,462.9 733.4,451.1 734.3,457.1 735.9,436.5 737.2,464.5 738.3,433.7 739.3,461.9 740.2,415.7 741.1,448.4 742.7,406.2 743.6,452.2 745.1,403.4 746.3,433.6 747.6,406.5 748.5,427.8 749.5,388.8 750.7,413.9 752.2,396.3 753.4,415.4 754.4,379.6 755.8,421.4 756.9,416.1 758.0,454.4 759.6,451.0 761.1,485.1 762.2,460.5 763.4,553.7 764.6,504.8 766.2,508.4 767.2,489.2 768.6,526.4 769.9,474.3 770.9,511.7 772.4,468.3 773.4,511.4 774.8,478.7 775.9,509.3 777.1,473.0 778.4,502.6 779.4,445.2 780.4,483.2 781.3,446.3 782.5,468.2 784.0,426.4 785.4,463.3 786.3,415.6 787.6,457.6 788.9,426.5 789.9,468.5 791.4,381.2 792.4,431.6 793.7,407.9 794.7,457.3 795.6,421.5 796.8,470.2 797.8,411.9 798.8,453.6 799.8,406.5 801.0,451.4 802.2,419.2 803.7,450.2 804.8,415.4 806.3,464.4 807.8,421.9 809.4,463.9 810.6,406.9 811.9,442.7 813.1,387.6 814.6,472.5 816.1,414.2 817.0,469.1 818.3,435.6 819.9,474.5 821.2,434.0 822.3,465.6 823.2,428.5 824.5,464.2 825.8,411.6 826.9,467.8 827.9,445.0 829.4,481.1 830.8,452.9 832.0,487.4 833.2,458.3 834.3,492.9 835.6,472.7 837.1,493.8 838.4,473.5 839.4,514.5 840.4,464.4 841.3,510.1 842.7,491.2 844.3,527.1 845.4,493.0 846.8,530.5 848.0,474.5 849.5,510.6 850.9,440.0 851.8,512.2 853.0,450.3 854.2,507.9 855.5,469.8 856.8,515.8 857.9,473.9 859.0,525.7 860.3,486.5 861.4,516.8 862.7,504.3 863.8,541.6 865.4,508.1 867.0,559.3 868.2,488.2 869.5,546.6" fill="none" stroke="#0000dc" stroke-width="1.1" stroke-linejoin="round" clip-path="url(#pc)"/><path d="M397 222.5H871M397 610.5H871M397.5 222V611M870.5 222V611M397 610.5h8M397 604.5h4M397 598.5h4M397 592.5h4M397 586.5h8M397 579.5h4M397 573.5h4M397 567.5h4M397 561.5h8M397 555.5h4M397 548.5h4M397 542.5h4M397 536.5h8M397 530.5h4M397 524.5h4M397 518.5h4M397 511.5h8M397 505.5h4M397 499.5h4M397 493.5h4M397 487.5h8M397 480.5h4M397 474.5h4M397 468.5h4M397 462.5h8M397 456.5h4M397 450.5h4M397 443.5h4M397 437.5h8M397 431.5h4M397 425.5h4M397 419.5h4M397 412.5h8M397 406.5h4M397 400.5h4M397 394.5h4M397 388.5h8M397 381.5h4M397 375.5h4M397 369.5h4M397 363.5h8M397 357.5h4M397 351.5h4M397 344.5h4M397 338.5h8M397 332.5h4M397 326.5h4M397 320.5h4M397 313.5h8M397 307.5h4M397 301.5h4M397 295.5h4M397 289.5h8M397 283.5h4M397 276.5h4M397 270.5h4M397 264.5h8M397 258.5h4M397 252.5h4M397 245.5h4M397 239.5h8M397 233.5h4M397 227.5h4M871 605.5h-4M871 599.5h-8M871 593.5h-4M871 587.5h-4M871 581.5h-4M871 576.5h-4M871 570.5h-8M871 564.5h-4M871 558.5h-4M871 552.5h-4M871 546.5h-4M871 540.5h-8M871 534.5h-4M871 528.5h-4M871 522.5h-4M871 516.5h-4M871 510.5h-8M871 504.5h-4M871 498.5h-4M871 492.5h-4M871 487.5h-4M871 481.5h-8M871 475.5h-4M871 469.5h-4M871 463.5h-4M871 457.5h-4M871 451.5h-8M871 445.5h-4M871 439.5h-4M871 433.5h-4M871 427.5h-4M871 421.5h-8M871 415.5h-4M871 409.5h-4M871 403.5h-4M871 398.5h-4M871 392.5h-8M871 386.5h-4M871 380.5h-4M871 374.5h-4M871 368.5h-4M871 362.5h-8M871 356.5h-4M871 350.5h-4M871 344.5h-4M871 338.5h-4M871 332.5h-8M871 326.5h-4M871 320.5h-4M871 314.5h-4M871 309.5h-4M871 303.5h-8M871 297.5h-4M871 291.5h-4M871 285.5h-4M871 279.5h-4M871 273.5h-8M871 267.5h-4M871 261.5h-4M871 255.5h-4M871 249.5h-4M871 243.5h-8M871 237.5h-4M871 231.5h-4M871 225.5h-4M397.5 611v-8M410.5 611v-4M422.5 611v-4M435.5 611v-4M447.5 611v-4M460.5 611v-8M473.5 611v-4M485.5 611v-4M498.5 611v-4M511.5 611v-4M523.5 611v-8M536.5 611v-4M548.5 611v-4M561.5 611v-4M574.5 611v-4M586.5 611v-8M599.5 611v-4M611.5 611v-4M624.5 611v-4M637.5 611v-4M649.5 611v-8M662.5 611v-4M674.5 611v-4M687.5 611v-4M700.5 611v-4M712.5 611v-8M725.5 611v-4M738.5 611v-4M750.5 611v-4M763.5 611v-4M775.5 611v-8M788.5 611v-4M801.5 611v-4M813.5 611v-4M826.5 611v-4M838.5 611v-8M851.5 611v-4M864.5 611v-4" stroke="#000" stroke-width="1" fill="none" shape-rendering="crispEdges"/><path d="M397.5 222V487M398.5 222V487" stroke="#0000d8" stroke-width="1" shape-rendering="crispEdges"/><g font-family="Liberation Mono, monospace" font-size="11.67" fill="#000"><text x="390" y="614.3" text-anchor="end">-5</text><text x="390" y="589.5" text-anchor="end">-4</text><text x="390" y="564.8" text-anchor="end">-3</text><text x="390" y="540.1" text-anchor="end">-2</text><text x="390" y="515.3" text-anchor="end">-1</text><text x="390" y="490.6" text-anchor="end">0</text><text x="390" y="465.9" text-anchor="end">1</text><text x="390" y="441.1" text-anchor="end">2</text><text x="390" y="416.4" text-anchor="end">3</text><text x="390" y="391.7" text-anchor="end">4</text><text x="390" y="366.9" text-anchor="end">5</text><text x="390" y="342.2" text-anchor="end">6</text><text x="390" y="317.5" text-anchor="end">7</text><text x="390" y="292.7" text-anchor="end">8</text><text x="390" y="268.0" text-anchor="end">9</text><text x="390" y="243.3" text-anchor="end">10</text><text x="879" y="603.3">-70</text><text x="879" y="573.6">-60</text><text x="879" y="544.0">-50</text><text x="879" y="514.3">-40</text><text x="879" y="484.6">-30</text><text x="879" y="454.9">-20</text><text x="879" y="425.3">-10</text><text x="879" y="395.6">0</text><text x="879" y="365.9">10</text><text x="879" y="336.3">20</text><text x="879" y="306.6">30</text><text x="879" y="276.9">40</text><text x="879" y="247.3">50</text><text x="398.0" y="629.7" text-anchor="middle">0.0</text><text x="461.1" y="629.7" text-anchor="middle">0.2</text><text x="524.1" y="629.7" text-anchor="middle">0.4</text><text x="587.2" y="629.7" text-anchor="middle">0.6</text><text x="650.2" y="629.7" text-anchor="middle">0.8</text><text x="713.3" y="629.7" text-anchor="middle">1.0</text><text x="776.4" y="629.7" text-anchor="middle">1.2</text><text x="839.4" y="629.7" text-anchor="middle">1.4</text></g></svg><div class="abs" style="left:0;top:738px;width:1024px;height:30px;background:linear-gradient(#3168d5 0,#4993e6 3%,#2a6be0 9%,#245ddb 20%,#2259d6 60%,#1f50c8 90%,#1941a5 100%)"></div><div class="abs" style="left:0;top:738px;width:97px;height:30px;border-radius:0 9px 9px 0;background:linear-gradient(#2f7a33 0,#56ac56 7%,#48a048 14%,#3c953c 30%,#388e38 60%,#318231 88%,#266a28 100%);box-shadow:1px 0 2px #1a3c8c,inset 2px 0 2px #2a6e2c"></div><div class="abs" style="left:34px;top:743px;font:italic bold 19px/20px 'Liberation Sans',sans-serif;color:#fff;text-shadow:1px 1px 2px #1c4a1c;letter-spacing:-0.5px">start</div><svg class="abs" style="left:9px;top:742px" width="22" height="22" viewBox="0 0 22 22"><g transform="skewX(-10) translate(4,0)"><path d="M2 3.5q3-2.5 6.5-.5v6.5q-3.500-2-6.500.5z" fill="#e8602c"/><path d="M10 3.500q3.500 2 7.500-.8v6.500q-4 2.800-7.500.8z" fill="#78c040"/><path d="M2 11.500q3-2.500 6.500-.5v6.500q-3.500-2-6.500.5z" fill="#4a8ce8"/><path d="M10 11.500q3.500 2 7.500-.8v6.500q-4 2.800-7.500.8z" fill="#f4c22c"/></g></svg><div class="abs" style="left:107px;top:741px;width:158px;height:25px;border-radius:3px;background:#1e52b7;box-shadow:inset 1px 1px 2px #123a8c"></div><div class="abs" style="left:136px;top:747px;font:11px/13px 'Liberation Sans',sans-serif;color:#fff;white-space:pre" id="t1">KMotion - Connected</div><svg class="abs" style="left:115px;top:741px" width="20" height="22" viewBox="0 0 20 22"><path d="M4 17.5L2.5 15.5L6 9.5L8 7.5H15L14 10L17.5 9L14.5 15.5L13 17.5Z" fill="none" stroke="#060a30" stroke-width="1.5" stroke-linejoin="round"/><path d="M12.5 9.5H8.5L8 12H11.5L11 14.5H6" fill="none" stroke="#060a30" stroke-width="1.4"/><circle cx="4.3" cy="10.3" r="1.7" fill="none" stroke="#060a30" stroke-width="1.3"/><path d="M6.5 3.5v4M4.5 5.5h4" stroke="#060a30" stroke-width="1.1"/></svg><div class="abs" style="left:267px;top:741px;width:158px;height:25px;border-radius:3px;background:linear-gradient(#5a98f0 0,#3c81f3 12%,#3a7cee 80%,#3270de 100%);box-shadow:inset 0 1px 0 #76a8f5"></div><div class="abs" style="left:295px;top:747px;font:11px/13px 'Liberation Sans',sans-serif;color:#fff;white-space:pre" id="t2">stepresponse_3_1(hi...</div><svg class="abs" style="left:277px;top:744px" width="14" height="20" viewBox="0 0 14 20"><path d="M2 3l3 14h4l3-14z" fill="#d8c8a0" stroke="#604020" stroke-width=".8"/><path d="M4 3l2 10M7 2v11M10 3l-2 10" stroke="#c03030" stroke-width="1.4"/><path d="M5.5 3l1 9" stroke="#30a030" stroke-width="1.2"/><path d="M8.5 3l-1 9" stroke="#f0c020" stroke-width="1.2"/></svg><div class="abs" style="left:931px;top:738px;width:93px;height:30px;background:linear-gradient(#1a8fe6 0,#1cb2f6 7%,#14a0ee 14%,#1096e8 50%,#0e8ce0 85%,#0b78c8 100%);border-left:1px solid #0e4aa8;box-shadow:inset 1px 0 0 #2ec0ff"></div><div class="abs" style="left:922px;top:744px;width:19px;height:19px;border-radius:10px;background:radial-gradient(circle at 45% 40%,#5ab4ff,#2a80e8 60%,#1a5cc8);box-shadow:0 0 0 1px #9ccaff"><svg width="19" height="19" viewBox="0 0 19 19" style="position:absolute;left:0;top:0"><path d="M11.5 5.5l-4 4l4 4" fill="none" stroke="#fff" stroke-width="2.2"/></svg></div><svg class="abs" style="left:880px;top:746px" width="15" height="17" viewBox="0 0 15 17"><path d="M1.5 1.5h12v11h-3.5l-1.5 3v-3h-7z" fill="#fffbd8" stroke="#000" stroke-width="1.4"/><text x="7.5" y="11" text-anchor="middle" font-family="Liberation Sans, sans-serif" font-weight="bold" font-size="11" fill="#000">?</text></svg><svg class="abs" style="left:905px;top:744px" width="11" height="19" viewBox="0 0 11 19"><rect x="3.5" y="1.5" width="6" height="4" fill="none" stroke="#fff" stroke-width="1.1"/><rect x="1.5" y="3.5" width="6" height="4" fill="#2460d8" stroke="#fff" stroke-width="1.1"/><path d="M2 13.5h5.5l-2.75 3.2z" fill="#fff"/></svg><svg class="abs" style="left:942px;top:744px" width="18" height="19" viewBox="0 0 18 19"><rect x="6.5" y="1.5" width="9" height="8" fill="#243070" stroke="#c8d4f0" stroke-width="1"/><rect x="1.5" y="6.5" width="9" height="8" fill="#38489a" stroke="#c8d4f0" stroke-width="1"/><path d="M9 10l7 7M16 10l-7 7" stroke="#e83030" stroke-width="2.4"/></svg><svg class="abs" style="left:961px;top:745px" width="14" height="17" viewBox="0 0 14 17"><path d="M7 1q3 2 6 1.5q0 9-6 13q-6-4-6-13q3 .5 6-1.5z" fill="#d41c1c" stroke="#f0c8c8" stroke-width=".8"/><path d="M4.8 5.5l4.4 4.4M9.2 5.5l-4.4 4.4" stroke="#fff" stroke-width="1.7"/></svg><div class="abs" style="left:983px;top:747px;font:11px/13px 'Liberation Sans',sans-serif;color:#fff;white-space:pre">12:38</div></body></html>
